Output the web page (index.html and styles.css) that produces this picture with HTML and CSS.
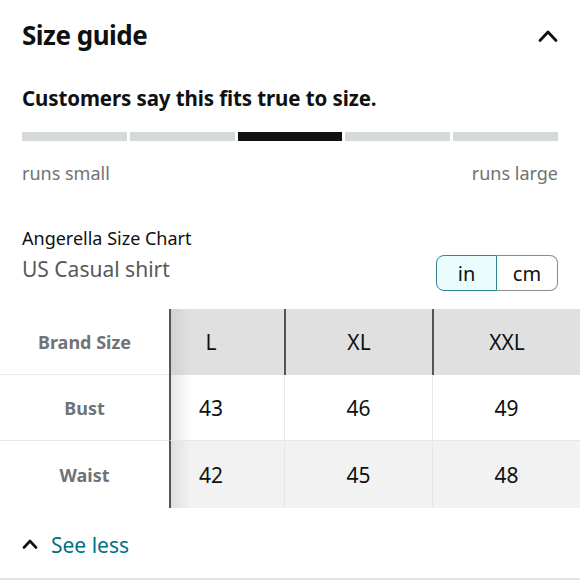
FILE: index.html
```html
<!DOCTYPE html>
<html>
<head>
<meta charset="utf-8">
<link rel="stylesheet" href="styles.css">
</head>
<body>
<div class="page">
  <div class="header">
    <h1 class="title">Size guide</h1>
    <svg class="chev" width="20" height="14" viewBox="0 0 20 14"><path d="M2 11.5 L10 3 L18 11.5" fill="none" stroke="#0f1111" stroke-width="2.8" stroke-linecap="round" stroke-linejoin="round"/></svg>
  </div>
  <div class="fit">
    <div class="fit-title">Customers say this fits true to size.</div>
    <div class="bars">
      <div class="bar"></div>
      <div class="bar"></div>
      <div class="bar active"></div>
      <div class="bar"></div>
      <div class="bar"></div>
    </div>
    <div class="ends"><span>runs small</span><span>runs large</span></div>
  </div>
  <div class="chart-head">
    <div class="chart-names">
      <div class="brand">Angerella Size Chart</div>
      <div class="cat">US Casual shirt</div>
    </div>
    <div class="toggle">
      <div class="opt on">in</div>
      <div class="opt">cm</div>
    </div>
  </div>
  <div class="table">
    <div class="row head">
      <div class="lab">Brand Size</div>
      <div class="c c1">L</div>
      <div class="c">XL</div>
      <div class="c">XXL</div>
    </div>
    <div class="row">
      <div class="lab">Bust</div>
      <div class="c c1">43</div>
      <div class="c">46</div>
      <div class="c">49</div>
    </div>
    <div class="row alt">
      <div class="lab">Waist</div>
      <div class="c c1">42</div>
      <div class="c">45</div>
      <div class="c">48</div>
    </div>
  </div>
  <div class="more">
    <svg class="chev-s" width="16" height="10" viewBox="0 0 16 10"><path d="M2 8.5 L8 2 L14 8.5" fill="none" stroke="#0f1111" stroke-width="2.6" stroke-linecap="round" stroke-linejoin="round"/></svg>
    <span class="link">See less</span>
  </div>
</div>
</body>
</html>
```
FILE: styles.css
```css
html, body { margin: 0; padding: 0; background: #fff; }
body { font-family: "Noto Sans", "Liberation Sans", sans-serif; color: #0f1111; }
.page { width: 580px; height: 580px; overflow: hidden; border-bottom: 2px solid #e3e3e3; box-sizing: border-box; }
.header { display: flex; justify-content: space-between; align-items: center; padding: 19px 22px 0 22px; height: 32px; }
.title { margin: 0; font-size: 26px; font-weight: 700; line-height: 32px; letter-spacing: -0.5px; }
.chev { margin-top: 2px; }
.fit { padding: 0 22px; margin-top: 34px; }
.fit-title { font-size: 20.5px; font-weight: 700; line-height: 26px; letter-spacing: -0.1px; }
.bars { display: flex; gap: 3px; margin-top: 21px; height: 9px; }
.bar { flex: 1; background: #d5d9d9; }
.bar.active { background: #0f1111; }
.ends { display: flex; justify-content: space-between; margin-top: 20px; font-size: 18px; line-height: 24px; color: #6f7373; }
.chart-head { display: flex; justify-content: space-between; align-items: flex-start; padding: 0 22px; margin-top: 41px; }
.brand { font-size: 18px; line-height: 24px; color: #0f1111; }
.cat { font-size: 21px; line-height: 28px; color: #565959; margin-top: 5px; }
.toggle { display: flex; height: 36px; margin-top: 29px; }
.opt { width: 61px; box-sizing: border-box; display: flex; align-items: center; justify-content: center; font-size: 20px; color: #0f1111; border: 1px solid #888c8c; }
.opt.on { background: #eafcfd; border: 1.5px solid #2f8590; border-radius: 8px 0 0 8px; }
.opt:last-child { border-left: none; border-radius: 0 8px 8px 0; }
.table { margin-top: 18px; }
.row { display: grid; grid-template-columns: 169px 115px 148px 148px; height: 66px; }
.row .lab { display: flex; align-items: center; justify-content: center; font-size: 18px; font-weight: 700; color: #6f7373; border-bottom: 1px solid #e7e7e7; background: #fff; }
.row .c { display: flex; align-items: center; justify-content: center; font-size: 21px; color: #0f1111; border-left: 1px solid #e7e7e7; border-bottom: 1px solid #e7e7e7; }
.row .c1 { border-left: 2px solid #555; padding-right: 33px; background: linear-gradient(90deg, #e6e6e6 0, #fff 20px); }
.row.head .c { background: #e0e0e0; border-left: 2px solid #555; border-bottom: none; }
.row.head .c1 { background: linear-gradient(90deg, #d2d2d2 0, #e0e0e0 20px); }
.row.head .lab { border-bottom: 1px solid #ececec; }
.row.head .c { height: 66px; }
.row.alt { height: 67px; }
.row.alt .c { background: #f2f2f2; }
.row.alt .c1 { background: linear-gradient(90deg, #e0e0e0 0, #f2f2f2 20px); }
.row.alt .lab, .row.alt .c { border-bottom: none; }
.more { display: flex; align-items: center; padding: 0 22px; margin-top: 22px; height: 30px; }
.chev-s { margin-right: 13px; margin-top: -3px; }
.link { font-size: 21px; line-height: 30px; color: #007185; }
```
